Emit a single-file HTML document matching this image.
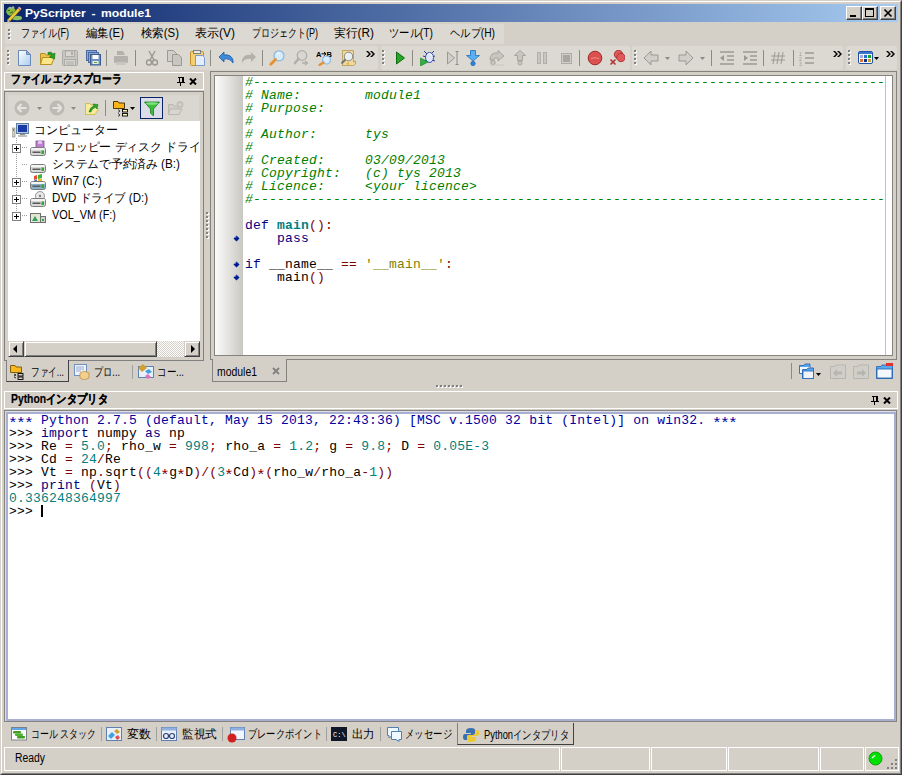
<!DOCTYPE html><html><head><meta charset="utf-8"><style>*{margin:0;padding:0;box-sizing:border-box}
html,body{width:902px;height:775px;overflow:hidden;background:#D4D0C8;font-family:"Liberation Sans",sans-serif;font-size:12px;color:#000;position:relative}
.a{position:absolute}
.t{position:absolute;white-space:pre;line-height:14px;transform-origin:0 0}
.m{position:absolute;font-family:"Liberation Mono",monospace;font-size:13px;line-height:13px;white-space:pre;letter-spacing:0.2px}
.k{color:#000080}.o{color:#800000}.n{color:#008080}.c{color:#008000;font-style:italic}.s{color:#808000}.b{color:#000}
</style></head><body><div class="a" style="left:0px;top:0px;width:902px;height:775px;border-top:1px solid #D4D0C8;border-left:1px solid #D4D0C8;border-right:1px solid #404040;border-bottom:1px solid #404040"></div>
<div class="a" style="left:1px;top:1px;width:900px;height:773px;border-top:1px solid #FFF;border-left:1px solid #FFF;border-right:1px solid #808080;border-bottom:1px solid #808080"></div>
<div class="a" style="left:4px;top:4px;width:894px;height:18px;background:linear-gradient(90deg,#0A246A,#A6CAF0)"></div>
<svg class="a" style="left:4px;top:3px;" width="20" height="19" viewBox="0 0 20 19"><ellipse cx="13" cy="15" rx="5" ry="2.2" fill="#8CC060"/><ellipse cx="7" cy="8.5" rx="4.8" ry="4.2" fill="#86BC3C"/><ellipse cx="6" cy="5" rx="1.6" ry="1.3" fill="#A0B0A0"/><ellipse cx="9" cy="4.5" rx="1.3" ry="1.2" fill="#A0B0A0"/><path d="M3.5 7.5 H6 M6 10 L9 9" stroke="#2A6A10" stroke-width="1"/><path d="M3.5 16.5 L14 5 L16.5 7 L6 18.5 Z" fill="#E8C838" stroke="#5A4A10" stroke-width="0.6"/><path d="M14 5 L15 3.5 L17.5 5.5 L16.5 7 Z" fill="#F0A0B0"/><path d="M3.5 16.5 L6 18.5 L3.5 19 Z" fill="#F4D0C0"/></svg>
<div class="t" id="t0" style="left:25px;top:5px;color:#FFF;font-weight:bold;font-size:11px;line-height:16px;word-spacing:2px;transform:scaleX(1.1048);">PyScripter - module1</div>
<div class="a" style="left:846px;top:6px;width:16px;height:14px;background:#D4D0C8;border-top:1px solid #FFF;border-left:1px solid #FFF;border-right:1px solid #404040;border-bottom:1px solid #404040;box-shadow:inset -1px -1px #808080"></div>
<svg class="a" style="left:846px;top:6px;" width="16" height="14" viewBox="0 0 16 14"><rect x="4" y="9" width="6" height="2" fill="#000"/></svg>
<div class="a" style="left:862px;top:6px;width:16px;height:14px;background:#D4D0C8;border-top:1px solid #FFF;border-left:1px solid #FFF;border-right:1px solid #404040;border-bottom:1px solid #404040;box-shadow:inset -1px -1px #808080"></div>
<svg class="a" style="left:862px;top:6px;" width="16" height="14" viewBox="0 0 16 14"><rect x="3.5" y="2.5" width="8" height="8" fill="none" stroke="#000"/><rect x="3" y="2" width="9" height="2" fill="#000"/></svg>
<div class="a" style="left:880px;top:6px;width:16px;height:14px;background:#D4D0C8;border-top:1px solid #FFF;border-left:1px solid #FFF;border-right:1px solid #404040;border-bottom:1px solid #404040;box-shadow:inset -1px -1px #808080"></div>
<svg class="a" style="left:880px;top:6px;" width="16" height="14" viewBox="0 0 16 14"><path d="M4.5 3.5 L11.5 10.5 M11.5 3.5 L4.5 10.5" stroke="#000" stroke-width="1.7"/></svg>
<div class="a" style="left:5px;top:24px;width:499px;height:20px;background:#DCD9D2;border-radius:2px"></div>
<div class="a" style="left:8px;top:29px;width:2px;height:2px;background:#808080;box-shadow:1px 1px #FFF"></div>
<div class="a" style="left:8px;top:33px;width:2px;height:2px;background:#808080;box-shadow:1px 1px #FFF"></div>
<div class="a" style="left:8px;top:37px;width:2px;height:2px;background:#808080;box-shadow:1px 1px #FFF"></div>
<div class="t" id="t1" style="left:21px;top:26px;font-size:12px;line-height:14px;transform:scaleX(0.7580);">ファイル(F)</div>
<div class="t" id="t2" style="left:86px;top:26px;font-size:12px;line-height:14px;transform:scaleX(0.9500);">編集(E)</div>
<div class="t" id="t3" style="left:141px;top:26px;font-size:12px;line-height:14px;transform:scaleX(0.9500);">検索(S)</div>
<div class="t" id="t4" style="left:195px;top:26px;font-size:12px;line-height:14px;transform:scaleX(1.0000);">表示(V)</div>
<div class="t" id="t5" style="left:252px;top:26px;font-size:12px;line-height:14px;transform:scaleX(0.7500);">プロジェクト(P)</div>
<div class="t" id="t6" style="left:334px;top:26px;font-size:12px;line-height:14px;transform:scaleX(0.9835);">実行(R)</div>
<div class="t" id="t7" style="left:389px;top:26px;font-size:12px;line-height:14px;transform:scaleX(0.8572);">ツール(T)</div>
<div class="t" id="t8" style="left:450px;top:26px;font-size:12px;line-height:14px;transform:scaleX(0.8543);">ヘルプ(H)</div>
<div class="a" style="left:5px;top:46px;width:373px;height:24px;background:#DCD9D2;border-radius:2px"></div>
<div class="a" style="left:381px;top:46px;width:249px;height:24px;background:#DCD9D2;border-radius:2px"></div>
<div class="a" style="left:632px;top:46px;width:211px;height:24px;background:#DCD9D2;border-radius:2px"></div>
<div class="a" style="left:846px;top:46px;width:51px;height:24px;background:#DCD9D2;border-radius:2px"></div>
<div class="a" style="left:7px;top:50px;width:2px;height:2px;background:#808080;box-shadow:1px 1px #FFF"></div>
<div class="a" style="left:7px;top:54px;width:2px;height:2px;background:#808080;box-shadow:1px 1px #FFF"></div>
<div class="a" style="left:7px;top:58px;width:2px;height:2px;background:#808080;box-shadow:1px 1px #FFF"></div>
<div class="a" style="left:7px;top:62px;width:2px;height:2px;background:#808080;box-shadow:1px 1px #FFF"></div>
<svg class="a" style="left:17px;top:50px;" width="16" height="16" viewBox="0 0 16 16"><defs><linearGradient id="gd" x1="0" y1="0" x2="1" y2="1"><stop offset="0" stop-color="#FFFFFF"/><stop offset="1" stop-color="#A8CCF0"/></linearGradient></defs><path d="M1.5 0.5 H9.5 L13.5 4.5 V15.5 H1.5 Z" fill="url(#gd)" stroke="#6A88B8"/><path d="M9.5 0.5 V4.5 H13.5 Z" fill="#7AA8E0" stroke="#6A88B8"/></svg>
<svg class="a" style="left:40px;top:50px;" width="16" height="16" viewBox="0 0 16 16"><path d="M0.5 3.5 H5 L6 5 H11.5 V14.5 H0.5 Z" fill="#E8C448" stroke="#B89020"/><path d="M2.5 7.5 H14.5 L11.5 14.5 H0.5 Z" fill="#FCE68A" stroke="#B89020"/><path d="M8 2.5 Q11 1 13 4 L15 3 L14.5 9 L9.5 7 L11.5 6 Q10.5 4 8 4.5 Z" fill="#28A028" stroke="#107010" stroke-width="0.6"/></svg>
<svg class="a" style="left:62px;top:50px;" width="16" height="16" viewBox="0 0 16 16"><rect x="0.5" y="0.5" width="15" height="15" rx="1" fill="#C8C6C0" stroke="#ADABA5"/><rect x="3.5" y="1" width="9" height="5.5" fill="#D8D6D0" stroke="#ADABA5"/><rect x="9" y="2" width="2" height="3" fill="#ADABA5"/><rect x="2.5" y="9.5" width="11" height="6" fill="#D8D6D0" stroke="#ADABA5"/><path d="M4 12 H12 M4 14 H12" stroke="#ADABA5"/></svg>
<svg class="a" style="left:86px;top:50px;" width="16" height="16" viewBox="0 0 16 16"><rect x="0.5" y="0.5" width="10" height="10" fill="#88A8D8" stroke="#4A6AA0"/><rect x="2.5" y="2.5" width="10" height="10" fill="#88A8D8" stroke="#4A6AA0"/><rect x="4.5" y="4.5" width="10" height="10.5" fill="#6E90C8" stroke="#3A5A90"/><rect x="6.5" y="5" width="6" height="4" fill="#FFF"/><rect x="6.5" y="11" width="6" height="3" fill="#E8F0D8"/><rect x="8" y="12" width="3" height="1" fill="#60A040"/></svg>
<div class="a" style="left:106px;top:50px;width:1px;height:16px;background:#8C8A84"></div>
<svg class="a" style="left:113px;top:50px;" width="16" height="16" viewBox="0 0 16 16"><path d="M4 1 H10 L12 5 H4 Z" fill="#B4B1AA"/><rect x="1" y="6" width="14" height="7" rx="1" fill="#B4B1AA"/><rect x="3" y="12" width="10" height="3" fill="#C8C6C0"/></svg>
<div class="a" style="left:135px;top:50px;width:1px;height:16px;background:#8C8A84"></div>
<svg class="a" style="left:144px;top:50px;" width="16" height="16" viewBox="0 0 16 16"><path d="M5 1 L10 10 M11 1 L6 10" stroke="#9C9990" stroke-width="1.5"/><circle cx="5" cy="12.5" r="2.5" fill="none" stroke="#9C9990" stroke-width="1.4"/><circle cx="11" cy="12.5" r="2.5" fill="none" stroke="#9C9990" stroke-width="1.4"/></svg>
<svg class="a" style="left:167px;top:50px;" width="16" height="16" viewBox="0 0 16 16"><path d="M0.5 0.5 H6.5 L9.5 3.5 V11.5 H0.5 Z" fill="#D0CEC8" stroke="#9C9990"/><path d="M5.5 4.5 H11.5 L14.5 7.5 V15.5 H5.5 Z" fill="#C8C6C0" stroke="#9C9990"/></svg>
<svg class="a" style="left:190px;top:50px;" width="16" height="16" viewBox="0 0 16 16"><rect x="0.5" y="1.5" width="13" height="14" rx="1" fill="#F2D070" stroke="#C09030"/><rect x="3.5" y="0.5" width="7" height="3" fill="#E8E8E8" stroke="#808080"/><path d="M5.5 5.5 H12.5 L14.5 7.5 V15.5 H5.5 Z" fill="#E4EEFA" stroke="#7A9CCF"/></svg>
<div class="a" style="left:210px;top:50px;width:1px;height:16px;background:#8C8A84"></div>
<svg class="a" style="left:218px;top:50px;" width="16" height="16" viewBox="0 0 16 16"><path d="M1 7 L6 2 V5 Q13 4 15 10 L15 13 Q12 8 6 9 V12 Z" fill="#3C8AD8" stroke="#1C5CA8" stroke-width="0.8"/></svg>
<svg class="a" style="left:241px;top:50px;" width="16" height="16" viewBox="0 0 16 16"><path d="M15 7 L10 2 V5 Q3 4 1 10 L1 13 Q4 8 10 9 V12 Z" fill="#B4B1AA"/></svg>
<div class="a" style="left:262px;top:50px;width:1px;height:16px;background:#8C8A84"></div>
<svg class="a" style="left:269px;top:50px;" width="16" height="16" viewBox="0 0 16 16"><circle cx="10" cy="5.8" r="5" fill="#D4ECFC" stroke="#8CB8E0" stroke-width="1.3"/><path d="M7.5 4 Q9 2.5 11 3" stroke="#FFF" fill="none"/><path d="M6.5 9.5 L1.8 14.2" stroke="#E89030" stroke-width="2.8" stroke-linecap="round"/></svg>
<svg class="a" style="left:293px;top:50px;" width="16" height="16" viewBox="0 0 16 16"><circle cx="9" cy="5.5" r="4.8" fill="#D8D6D0" stroke="#B0AEA8" stroke-width="1.3"/><path d="M5.5 9 L2 13" stroke="#B0AEA8" stroke-width="2.6" stroke-linecap="round"/><path d="M9 13 H14 M12 11 L14.5 13 L12 15" stroke="#B0AEA8" stroke-width="1.3" fill="none"/></svg>
<svg class="a" style="left:316px;top:50px;" width="16" height="16" viewBox="0 0 16 16"><text x="0" y="6.5" font-size="7.5" font-weight="bold" font-family="Liberation Sans" letter-spacing="-0.3">A</text><text x="10.5" y="6.5" font-size="7.5" font-weight="bold" font-family="Liberation Sans">B</text><path d="M5.5 3.8 H9.5 M8 2 L10 3.8 L8 5.6" stroke="#000" stroke-width="1" fill="none"/><circle cx="10.5" cy="10" r="4" fill="#D4ECFC" stroke="#8CB8E0" stroke-width="1.2"/><path d="M7.5 12.5 L3.5 15" stroke="#E89030" stroke-width="2.2" stroke-linecap="round"/></svg>
<svg class="a" style="left:340px;top:50px;" width="16" height="16" viewBox="0 0 16 16"><path d="M2.5 0.5 H13.5 V12 L15.5 11 V14 L13.5 15.5 H2.5 Z" fill="#F0D898" stroke="#B89850" stroke-width="0.8"/><circle cx="8.5" cy="6.5" r="4.2" fill="#E8F0F4" stroke="#909088" stroke-width="1.1"/><path d="M5.5 9.5 L1.5 13.5" stroke="#707070" stroke-width="1.8"/><path d="M6 14 L9 11 L9 15.5 Z" fill="#D8B868"/></svg>
<svg class="a" style="left:366px;top:51px;" width="9" height="6" viewBox="0 0 9 6"><path d="M0 0 H2 L5 3 L2 6 H0 L3 3 Z M4 0 H6 L9 3 L6 6 H4 L7 3 Z" fill="#000"/></svg>
<div class="a" style="left:382px;top:50px;width:2px;height:2px;background:#808080;box-shadow:1px 1px #FFF"></div>
<div class="a" style="left:382px;top:54px;width:2px;height:2px;background:#808080;box-shadow:1px 1px #FFF"></div>
<div class="a" style="left:382px;top:58px;width:2px;height:2px;background:#808080;box-shadow:1px 1px #FFF"></div>
<div class="a" style="left:382px;top:62px;width:2px;height:2px;background:#808080;box-shadow:1px 1px #FFF"></div>
<svg class="a" style="left:394px;top:50px;" width="16" height="16" viewBox="0 0 16 16"><path d="M2.5 2 L10.5 8 L2.5 14 Z" fill="#28A428" stroke="#0E6E0E"/></svg>
<div class="a" style="left:412px;top:50px;width:1px;height:16px;background:#8C8A84"></div>
<svg class="a" style="left:420px;top:50px;" width="16" height="16" viewBox="0 0 16 16"><path d="M4 1 L7 4 M14 1 L11 4 M3 6 L6 7 M15 6 L12 7 M4 11 L7 10 M15 11 L12 10" stroke="#2A3A90" stroke-width="1"/><ellipse cx="9.5" cy="7.5" rx="4" ry="5" fill="#DDE6F8" stroke="#3050A8"/><path d="M8 4 Q11 3 12 6" stroke="#FFF" fill="none"/><path d="M0.5 8 L8 12 L0.5 16 Z" fill="#30B040" stroke="#108020" stroke-width="0.6"/></svg>
<svg class="a" style="left:446px;top:50px;" width="16" height="16" viewBox="0 0 16 16"><path d="M1.5 2 L8.5 8 L1.5 14 Z" fill="#D0CEC8" stroke="#9C9990"/><path d="M11 1.5 V14.5 M9.5 1.5 H12.5 M9.5 14.5 H12.5" stroke="#8C8A84"/></svg>
<svg class="a" style="left:466px;top:50px;" width="16" height="16" viewBox="0 0 16 16"><path d="M4.5 0.5 H9.5 V5.5 H13.5 L7 11 L0.5 5.5 H4.5 Z" fill="#58B0F0" stroke="#2070C0" stroke-width="0.8"/><circle cx="7" cy="13.5" r="2.2" fill="#3080D0" stroke="#1860B0" stroke-width="0.6"/></svg>
<svg class="a" style="left:489px;top:50px;" width="16" height="16" viewBox="0 0 16 16"><path d="M1 10 Q1 2 9 3 L9 0.5 L15 6 L9 11 V8 Q5 7 4.5 10 Z" fill="#C8C6C0" stroke="#9C9990" stroke-width="0.8"/><circle cx="4" cy="12.5" r="2.2" fill="#C8C6C0" stroke="#9C9990" stroke-width="0.8"/><path d="M1 15 H15" stroke="#C8C6C0"/></svg>
<svg class="a" style="left:514px;top:50px;" width="16" height="16" viewBox="0 0 16 16"><path d="M3.5 10.5 H8.5 V5.5 H11.5 L6 0.5 L0.5 5.5 H3.5 Z" fill="#C8C6C0" stroke="#9C9990" stroke-width="0.8"/><circle cx="6" cy="13" r="2" fill="#C8C6C0" stroke="#9C9990" stroke-width="0.8"/></svg>
<svg class="a" style="left:537px;top:50px;" width="16" height="16" viewBox="0 0 16 16"><rect x="0.5" y="2.5" width="3" height="11" fill="#C8C6C0" stroke="#B0AEA8"/><rect x="6.5" y="2.5" width="3" height="11" fill="#C8C6C0" stroke="#B0AEA8"/></svg>
<svg class="a" style="left:561px;top:50px;" width="16" height="16" viewBox="0 0 16 16"><rect x="0.5" y="3.5" width="10" height="10" fill="#D0CEC8" stroke="#ADABA5"/><rect x="2" y="5" width="7" height="7" fill="#A8A6A0"/></svg>
<div class="a" style="left:579px;top:50px;width:1px;height:16px;background:#8C8A84"></div>
<svg class="a" style="left:587px;top:50px;" width="16" height="16" viewBox="0 0 16 16"><circle cx="8" cy="8" r="6.8" fill="#DC5050" stroke="#A02828"/><path d="M4 8.5 Q8 7 12 8.5" stroke="#F09090" fill="none"/></svg>
<svg class="a" style="left:609px;top:50px;" width="16" height="16" viewBox="0 0 16 16"><circle cx="9.5" cy="4.5" r="4.2" fill="#E05858" stroke="#A02828" stroke-width="0.8"/><circle cx="12" cy="7.5" r="4.2" fill="#E05858" stroke="#A02828" stroke-width="0.8"/><path d="M1.5 9.5 L6.5 14.5 M6.5 9.5 L1.5 14.5" stroke="#B03030" stroke-width="1.6"/></svg>
<div class="a" style="left:634px;top:50px;width:2px;height:2px;background:#808080;box-shadow:1px 1px #FFF"></div>
<div class="a" style="left:634px;top:54px;width:2px;height:2px;background:#808080;box-shadow:1px 1px #FFF"></div>
<div class="a" style="left:634px;top:58px;width:2px;height:2px;background:#808080;box-shadow:1px 1px #FFF"></div>
<div class="a" style="left:634px;top:62px;width:2px;height:2px;background:#808080;box-shadow:1px 1px #FFF"></div>
<svg class="a" style="left:643px;top:50px;" width="16" height="16" viewBox="0 0 16 16"><path d="M1 8 L8 1 V5 H15 V11 H8 V15 Z" fill="#D0CEC8" stroke="#9C9990"/></svg>
<svg class="a" style="left:665px;top:57px;" width="5" height="3" viewBox="0 0 5 3"><path d="M0 0 H5 L2.5 3 Z" fill="#8C8A84"/></svg>
<svg class="a" style="left:678px;top:50px;" width="16" height="16" viewBox="0 0 16 16"><path d="M15 8 L8 1 V5 H1 V11 H8 V15 Z" fill="#D0CEC8" stroke="#9C9990"/></svg>
<svg class="a" style="left:700px;top:57px;" width="5" height="3" viewBox="0 0 5 3"><path d="M0 0 H5 L2.5 3 Z" fill="#8C8A84"/></svg>
<div class="a" style="left:711px;top:50px;width:1px;height:16px;background:#8C8A84"></div>
<svg class="a" style="left:719px;top:50px;" width="16" height="16" viewBox="0 0 16 16"><path d="M1 2 H15 M8 6 H15 M8 10 H15 M1 14 H15" stroke="#9C9990" stroke-width="1.5"/><path d="M1 8 L5 5 V11 Z" fill="#9C9990"/></svg>
<svg class="a" style="left:742px;top:50px;" width="16" height="16" viewBox="0 0 16 16"><path d="M1 2 H15 M8 6 H15 M8 10 H15 M1 14 H15" stroke="#9C9990" stroke-width="1.5"/><path d="M6 8 L2 5 V11 Z" fill="#9C9990"/></svg>
<div class="a" style="left:763px;top:50px;width:1px;height:16px;background:#8C8A84"></div>
<svg class="a" style="left:770px;top:50px;" width="16" height="16" viewBox="0 0 16 16"><path d="M5 2 L3 14 M9 2 L7 14 M13 2 L11 14 M1 6 H15 M1 10 H15" stroke="#9C9990" stroke-width="1"/></svg>
<div class="a" style="left:793px;top:50px;width:1px;height:16px;background:#8C8A84"></div>
<svg class="a" style="left:799px;top:50px;" width="16" height="16" viewBox="0 0 16 16"><path d="M6 3 H15 M6 8 H15 M6 13 H15" stroke="#9C9990" stroke-width="1.5"/><text x="0" y="6" font-size="5" fill="#9C9990">1</text><text x="0" y="11" font-size="5" fill="#9C9990">2</text><text x="0" y="16" font-size="5" fill="#9C9990">3</text></svg>
<svg class="a" style="left:833px;top:51px;" width="9" height="6" viewBox="0 0 9 6"><path d="M0 0 H2 L5 3 L2 6 H0 L3 3 Z M4 0 H6 L9 3 L6 6 H4 L7 3 Z" fill="#000"/></svg>
<div class="a" style="left:848px;top:50px;width:2px;height:2px;background:#808080;box-shadow:1px 1px #FFF"></div>
<div class="a" style="left:848px;top:54px;width:2px;height:2px;background:#808080;box-shadow:1px 1px #FFF"></div>
<div class="a" style="left:848px;top:58px;width:2px;height:2px;background:#808080;box-shadow:1px 1px #FFF"></div>
<div class="a" style="left:848px;top:62px;width:2px;height:2px;background:#808080;box-shadow:1px 1px #FFF"></div>
<svg class="a" style="left:858px;top:51px;" width="15" height="13" viewBox="0 0 15 13"><rect x="0.5" y="0.5" width="14" height="12" rx="1.5" fill="#F4F8FF" stroke="#1E50A8"/><rect x="1" y="1" width="13" height="2" fill="#3A78D0"/><rect x="2" y="4" width="3" height="3" fill="#A8A8D8"/><rect x="6" y="4" width="3" height="3" fill="#2070D0"/><rect x="10" y="4" width="3" height="3" fill="#20A030"/><rect x="2" y="8" width="3" height="3" fill="#E07040"/><rect x="6" y="8" width="3" height="3" fill="#103080"/><rect x="10" y="8" width="3" height="3" fill="#C8A030"/></svg>
<svg class="a" style="left:874px;top:57px;" width="5" height="3" viewBox="0 0 5 3"><path d="M0 0 H5 L2.5 3 Z" fill="#000"/></svg>
<svg class="a" style="left:886px;top:51px;" width="9" height="6" viewBox="0 0 9 6"><path d="M0 0 H2 L5 3 L2 6 H0 L3 3 Z M4 0 H6 L9 3 L6 6 H4 L7 3 Z" fill="#000"/></svg>
<div class="a" style="left:4px;top:72px;width:200px;height:18px;border:1px solid #FFF"></div>
<div class="t" id="t9" style="left:11px;top:73px;font-weight:bold;font-size:12px;line-height:12px;-webkit-text-stroke:0.2px #000;transform:scaleX(0.8201);">ファイル エクスプローラ</div>
<svg class="a" style="left:177px;top:77px;" width="8" height="9" viewBox="0 0 8 9"><rect x="1" y="0" width="6" height="1" fill="#000"/><rect x="2" y="1" width="1" height="4" fill="#000"/><rect x="5" y="1" width="2" height="4" fill="#000"/><rect x="0" y="5" width="8" height="1" fill="#000"/><rect x="3" y="6" width="1" height="3" fill="#000"/></svg>
<svg class="a" style="left:189px;top:78px;" width="8" height="7" viewBox="0 0 8 7"><path d="M1 0.5 L7 6.5 M7 0.5 L1 6.5" stroke="#000" stroke-width="2"/></svg>
<div class="a" style="left:4px;top:91px;width:200px;height:270px;border-top:1px solid #808080;border-left:1px solid #808080;border-right:1px solid #808080"></div>
<div class="a" style="left:8px;top:95px;width:191px;height:26px;background:#DAD7D0"></div>
<svg class="a" style="left:14px;top:100px;" width="16" height="16" viewBox="0 0 16 16"><circle cx="8" cy="8" r="7.5" fill="#BDBAB3"/><path d="M3.5 8 L7.5 4 M3.5 8 L7.5 12 M3.5 8 H12.5" stroke="#E6E4DE" stroke-width="2" fill="none"/></svg>
<svg class="a" style="left:37px;top:107px;" width="5" height="3" viewBox="0 0 5 3"><path d="M0 0 H5 L2.5 3 Z" fill="#8C8A84"/></svg>
<svg class="a" style="left:49px;top:100px;" width="16" height="16" viewBox="0 0 16 16"><circle cx="8" cy="8" r="7.5" fill="#BDBAB3"/><path d="M12.5 8 L8.5 4 M12.5 8 L8.5 12 M12.5 8 H3.5" stroke="#E6E4DE" stroke-width="2" fill="none"/></svg>
<svg class="a" style="left:71px;top:107px;" width="5" height="3" viewBox="0 0 5 3"><path d="M0 0 H5 L2.5 3 Z" fill="#8C8A84"/></svg>
<svg class="a" style="left:84px;top:100px;" width="16" height="16" viewBox="0 0 16 16"><path d="M1.5 3.5 H6 L7 5 H12.5 V8 L14.5 9 L11 14.5 H1.5 Z" fill="#F6EC9A" stroke="#C8B440" stroke-width="0.8"/><path d="M5 12 Q6 7 10 6 L9 4 L14 4.5 L13 9 L11.5 7.5 Q8 8 7 12 Z" fill="#30A030" stroke="#107010" stroke-width="0.5"/></svg>
<div class="a" style="left:105px;top:100px;width:1px;height:16px;background:#8C8A84"></div>
<svg class="a" style="left:113px;top:100px;" width="16" height="17" viewBox="0 0 16 17"><path d="M0.5 1.5 H5 L6 3 H11.5 V8.5 H0.5 Z" fill="#FAB318" stroke="#3A2A00" stroke-width="0.9"/><path d="M5 9.5 L7 11 L5 12.5 M5 13.5 L7 15 L5 16.5" stroke="#000" stroke-width="0.7" fill="none"/><rect x="9.5" y="9.5" width="5" height="2.5" fill="#FFF6C0" stroke="#000" stroke-width="0.9"/><rect x="9.5" y="13.5" width="5" height="2.5" fill="#FFF6C0" stroke="#000" stroke-width="0.9"/></svg>
<svg class="a" style="left:130px;top:107px;" width="5" height="3" viewBox="0 0 5 3"><path d="M0 0 H5 L2.5 3 Z" fill="#000"/></svg>
<div class="a" style="left:140px;top:97px;width:23px;height:22px;border:1px solid #0A246A;background:#DCDDE6"></div>
<svg class="a" style="left:144px;top:101px;" width="16" height="16" viewBox="0 0 16 16"><path d="M0.5 1 H15.5 L9.5 8 V15 L6.5 12 V8 Z" fill="#3CC03C" stroke="#1C7A1C" stroke-width="0.8"/><ellipse cx="8" cy="2.5" rx="6" ry="1.3" fill="#80E080"/></svg>
<svg class="a" style="left:168px;top:100px;" width="16" height="16" viewBox="0 0 16 16"><path d="M0.5 4.5 H5 L6 6 H11 V14.5 H0.5 Z" fill="#D0CEC8" stroke="#BAB7B0"/><path d="M2 9 H14 L11 14.5 H0.5 Z" fill="#D8D6D0" stroke="#BAB7B0"/><circle cx="12" cy="4.5" r="3.5" fill="#C4C1BA"/><circle cx="12" cy="4.5" r="1.3" fill="#DAD7D0"/></svg>
<div class="a" style="left:8px;top:121px;width:192px;height:220px;background:#FFF"></div>
<svg class="a" style="left:12px;top:123px;" width="17" height="15" viewBox="0 0 17 15"><rect x="4.5" y="0.5" width="12" height="10" fill="#B8C8E0" stroke="#6080A0"/><rect x="6" y="2" width="9" height="7" fill="#1A3AA8"/><rect x="8" y="11" width="5" height="1" fill="#909090"/><rect x="6" y="12" width="9" height="2" fill="#C0C0C0"/><rect x="0" y="5" width="3" height="9" fill="#D0D0C0" stroke="#808080" stroke-width="0.6"/><rect x="1" y="6" width="1" height="2" fill="#40A040"/></svg>
<div class="t" id="t10" style="left:34px;top:123px;font-size:12px;line-height:14px;transform:scaleX(1.0000);">コンピューター</div>
<div class="a" style="left:16px;top:138px;width:1px;height:79px;background:repeating-linear-gradient(#A0A0A0 0 1px,transparent 1px 2px)"></div>
<div class="a" style="left:22px;top:147px;width:6px;height:1px;background:repeating-linear-gradient(90deg,#A0A0A0 0 1px,transparent 1px 2px)"></div>
<div class="a" style="left:22px;top:164px;width:6px;height:1px;background:repeating-linear-gradient(90deg,#A0A0A0 0 1px,transparent 1px 2px)"></div>
<div class="a" style="left:22px;top:181px;width:6px;height:1px;background:repeating-linear-gradient(90deg,#A0A0A0 0 1px,transparent 1px 2px)"></div>
<div class="a" style="left:22px;top:198px;width:6px;height:1px;background:repeating-linear-gradient(90deg,#A0A0A0 0 1px,transparent 1px 2px)"></div>
<div class="a" style="left:22px;top:215px;width:6px;height:1px;background:repeating-linear-gradient(90deg,#A0A0A0 0 1px,transparent 1px 2px)"></div>
<div class="a" style="left:12px;top:144px;width:9px;height:9px;border:1px solid #808080;background:#FFF"></div>
<div class="a" style="left:14px;top:148px;width:5px;height:1px;background:#000"></div>
<div class="a" style="left:16px;top:146px;width:1px;height:5px;background:#000"></div>
<div class="a" style="left:12px;top:178px;width:9px;height:9px;border:1px solid #808080;background:#FFF"></div>
<div class="a" style="left:14px;top:182px;width:5px;height:1px;background:#000"></div>
<div class="a" style="left:16px;top:180px;width:1px;height:5px;background:#000"></div>
<div class="a" style="left:12px;top:195px;width:9px;height:9px;border:1px solid #808080;background:#FFF"></div>
<div class="a" style="left:14px;top:199px;width:5px;height:1px;background:#000"></div>
<div class="a" style="left:16px;top:197px;width:1px;height:5px;background:#000"></div>
<div class="a" style="left:12px;top:212px;width:9px;height:9px;border:1px solid #808080;background:#FFF"></div>
<div class="a" style="left:14px;top:216px;width:5px;height:1px;background:#000"></div>
<div class="a" style="left:16px;top:214px;width:1px;height:5px;background:#000"></div>
<svg class="a" style="left:30px;top:140px;" width="16" height="16" viewBox="0 0 16 16"><rect x="6" y="1" width="8" height="8" fill="#C080D0" stroke="#805090" stroke-width="0.8"/><rect x="8" y="1" width="4" height="3" fill="#E0C0F0"/><rect x="0.5" y="7.5" width="15" height="8" rx="2" fill="#D8D8D8" stroke="#7A7A7A"/><rect x="1" y="8" width="14" height="2" rx="1" fill="#F4F4F4"/><rect x="2.5" y="11.5" width="8" height="1.5" fill="#5A5A5A"/><rect x="11.5" y="10.5" width="2.5" height="3.5" fill="#30A830"/></svg>
<div class="t" id="t11" style="left:52px;top:140px;font-size:12px;line-height:14px;transform:scaleX(0.9889);">フロッピー ディスク ドライ</div>
<svg class="a" style="left:30px;top:157px;" width="16" height="16" viewBox="0 0 16 16"><rect x="0.5" y="7.5" width="15" height="8" rx="2" fill="#D8D8D8" stroke="#7A7A7A"/><rect x="1" y="8" width="14" height="2" rx="1" fill="#F4F4F4"/><rect x="2.5" y="11.5" width="8" height="1.5" fill="#5A5A5A"/><rect x="11.5" y="10.5" width="2.5" height="3.5" fill="#30A830"/></svg>
<div class="t" id="t12" style="left:52px;top:157px;font-size:12px;line-height:14px;transform:scaleX(0.9796);">システムで予約済み (B:)</div>
<svg class="a" style="left:30px;top:174px;" width="16" height="16" viewBox="0 0 16 16"><path d="M4 2 L7 1 V5 L4 6 Z" fill="#E05030"/><path d="M8 1 L12 0 V4 L8 5 Z" fill="#40B040"/><path d="M4 6.5 L7 5.5 V9 L4 10 Z" fill="#3070E0"/><path d="M8 5 L12 4.5 V8 L8 9 Z" fill="#F0C020"/><rect x="0.5" y="7.5" width="15" height="8" rx="2" fill="#8AB0C8" stroke="#7A7A7A"/><rect x="1" y="8" width="14" height="2" rx="1" fill="#F4F4F4"/><rect x="2.5" y="11.5" width="8" height="1.5" fill="#5A5A5A"/><rect x="11.5" y="10.5" width="2.5" height="3.5" fill="#30A830"/></svg>
<div class="t" id="t13" style="left:52px;top:174px;font-size:12px;line-height:14px;transform:scaleX(0.9867);">Win7 (C:)</div>
<svg class="a" style="left:30px;top:191px;" width="16" height="16" viewBox="0 0 16 16"><circle cx="10" cy="5" r="4.5" fill="#E8E8E8" stroke="#808080" stroke-width="0.8"/><circle cx="10" cy="5" r="1.2" fill="#808080"/><rect x="0.5" y="7.5" width="15" height="8" rx="2" fill="#D8D8D8" stroke="#7A7A7A"/><rect x="1" y="8" width="14" height="2" rx="1" fill="#F4F4F4"/><rect x="2.5" y="11.5" width="8" height="1.5" fill="#5A5A5A"/><rect x="11.5" y="10.5" width="2.5" height="3.5" fill="#30A830"/></svg>
<div class="t" id="t14" style="left:52px;top:191px;font-size:12px;line-height:14px;transform:scaleX(0.9600);">DVD ドライブ (D:)</div>
<svg class="a" style="left:30px;top:208px;" width="16" height="16" viewBox="0 0 16 16"><rect x="0.5" y="5.5" width="10" height="9" fill="#E0E8D0" stroke="#707070"/><path d="M2 13 L5 8 L8 13 Z" fill="#30A060"/><rect x="10.5" y="8.5" width="5" height="6" fill="#D0D0D0" stroke="#707070"/><rect x="12" y="11" width="2" height="2" fill="#30B030"/></svg>
<div class="t" id="t15" style="left:52px;top:208px;font-size:12px;line-height:14px;transform:scaleX(0.9054);">VOL_VM (F:)</div>
<div class="a" style="left:8px;top:341px;width:192px;height:16px;background:repeating-conic-gradient(#D4D0C8 0 25%,#FFF 0 50%) 0 0/2px 2px"></div>
<div class="a" style="left:8px;top:341px;width:16px;height:16px;background:#D4D0C8;border-top:1px solid #D4D0C8;border-left:1px solid #D4D0C8;border-right:1px solid #404040;border-bottom:1px solid #404040;box-shadow:inset 1px 1px #FFF,inset -1px -1px #808080"></div>
<svg class="a" style="left:8px;top:341px;" width="16" height="16" viewBox="0 0 16 16"><path d="M5 8 L9 4 V12 Z" fill="#000"/></svg>
<div class="a" style="left:24px;top:341px;width:133px;height:16px;background:#D4D0C8;border-top:1px solid #D4D0C8;border-left:1px solid #D4D0C8;border-right:1px solid #404040;border-bottom:1px solid #404040;box-shadow:inset 1px 1px #FFF,inset -1px -1px #808080"></div>
<div class="a" style="left:184px;top:341px;width:16px;height:16px;background:#D4D0C8;border-top:1px solid #D4D0C8;border-left:1px solid #D4D0C8;border-right:1px solid #404040;border-bottom:1px solid #404040;box-shadow:inset 1px 1px #FFF,inset -1px -1px #808080"></div>
<svg class="a" style="left:184px;top:341px;" width="16" height="16" viewBox="0 0 16 16"><path d="M11 8 L7 4 V12 Z" fill="#000"/></svg>
<div class="a" style="left:4px;top:360px;width:200px;height:1px;background:#808080"></div>
<div class="a" style="left:6px;top:360px;width:63px;height:22px;background:#D4D0C8;border-left:1px solid #808080;border-right:1px solid #404040;border-bottom:1px solid #404040"></div>
<svg class="a" style="left:10px;top:364px;" width="18" height="16" viewBox="0 0 18 16"><path d="M0.5 1.5 H5 L6 3 H11.5 V8.5 H0.5 Z" fill="#F8B820" stroke="#806010"/><path d="M4 10 L6 11 L4 12 M4 13 L6 14" stroke="#000" stroke-width="0.8" fill="none"/><rect x="8" y="9.5" width="5" height="2.5" fill="none" stroke="#000" stroke-width="0.9"/><rect x="8" y="13" width="5" height="2.5" fill="none" stroke="#000" stroke-width="0.9"/></svg>
<div class="t" id="t16" style="left:31px;top:365px;font-size:12px;line-height:14px;transform:scaleX(0.7171);">ファイ...</div>
<svg class="a" style="left:74px;top:364px;" width="16" height="16" viewBox="0 0 16 16"><rect x="0.5" y="0.5" width="12" height="11" fill="#F0F4FC" stroke="#7090C0"/><path d="M2 3 H10 M2 5 H10 M2 7 H7" stroke="#90A8D0"/><path d="M6 9 L10 7 L15 9 V14 L10 16 L6 14 Z" fill="#F0D090" stroke="#C09040" stroke-width="0.8"/></svg>
<div class="t" id="t17" style="left:94px;top:365px;font-size:12px;line-height:14px;transform:scaleX(0.7644);">プロ...</div>
<div class="a" style="left:132px;top:365px;width:1px;height:14px;background:#A0A0A0"></div>
<svg class="a" style="left:137px;top:363px;" width="18" height="17" viewBox="0 0 18 17"><rect x="1.5" y="3.5" width="15" height="11" fill="#E8F0FC" stroke="#6080B0"/><path d="M1 5 L6 1 L10 5 L5 9 Z" fill="#D0A030"/><path d="M8 8 L12 6 L15 9 L11 11 Z" fill="#40A0E0"/><path d="M8 13 L11 11 L14 14 L11 16 Z" fill="#E070C0"/></svg>
<div class="t" id="t18" style="left:157px;top:365px;font-size:12px;line-height:14px;transform:scaleX(0.7938);">コー...</div>
<div class="a" style="left:206px;top:212px;width:2px;height:2px;background:#808080;box-shadow:1px 1px #FFF"></div>
<div class="a" style="left:206px;top:216px;width:2px;height:2px;background:#808080;box-shadow:1px 1px #FFF"></div>
<div class="a" style="left:206px;top:220px;width:2px;height:2px;background:#808080;box-shadow:1px 1px #FFF"></div>
<div class="a" style="left:206px;top:224px;width:2px;height:2px;background:#808080;box-shadow:1px 1px #FFF"></div>
<div class="a" style="left:206px;top:228px;width:2px;height:2px;background:#808080;box-shadow:1px 1px #FFF"></div>
<div class="a" style="left:206px;top:232px;width:2px;height:2px;background:#808080;box-shadow:1px 1px #FFF"></div>
<div class="a" style="left:206px;top:236px;width:2px;height:2px;background:#808080;box-shadow:1px 1px #FFF"></div>
<div class="a" style="left:210px;top:71px;width:687px;height:289px;border:1px solid #85837D"></div>
<div class="a" style="left:214px;top:75px;width:679px;height:281px;background:#FFF;border:1px solid #85837D"></div>
<div class="a" style="left:215px;top:76px;width:28px;height:279px;background:linear-gradient(90deg,#FAFAFA,#E6E5E2 45%,#C9C7C1)"></div>
<div class="a" style="left:885px;top:76px;width:1px;height:279px;background:#C0C0C0"></div>
<div class="m" style="left:245px;top:76px;width:640px;overflow:hidden;font-size:13px;line-height:13px;letter-spacing:0.2px"><span class="c">#-------------------------------------------------------------------------------</span>
<span class="c"># Name:        module1</span>
<span class="c"># Purpose:</span>
<span class="c">#</span>
<span class="c"># Author:      tys</span>
<span class="c">#</span>
<span class="c"># Created:     03/09/2013</span>
<span class="c"># Copyright:   (c) tys 2013</span>
<span class="c"># Licence:     &lt;your licence&gt;</span>
<span class="c">#-------------------------------------------------------------------------------</span>

<span class="k">def </span><span style="color:#008080;font-weight:bold">main</span><span class="o">():</span>
<span class="k">    pass</span>

<span class="k">if </span><span class="b">__name__ </span><span class="o">== </span><span class="s">&#x27;__main__&#x27;</span><span class="o">:</span>
<span class="b">    main</span><span class="o">()</span></div>
<svg class="a" style="left:233px;top:235px;" width="7" height="7" viewBox="0 0 7 7"><path d="M3.5 0.5 L6.5 3.5 L3.5 6.5 L0.5 3.5 Z" fill="#001C90"/><path d="M1.5 2.5 L3 1 L3.5 1.5 L2 3 Z" fill="#80D0FF"/></svg>
<svg class="a" style="left:233px;top:261px;" width="7" height="7" viewBox="0 0 7 7"><path d="M3.5 0.5 L6.5 3.5 L3.5 6.5 L0.5 3.5 Z" fill="#001C90"/><path d="M1.5 2.5 L3 1 L3.5 1.5 L2 3 Z" fill="#80D0FF"/></svg>
<svg class="a" style="left:233px;top:274px;" width="7" height="7" viewBox="0 0 7 7"><path d="M3.5 0.5 L6.5 3.5 L3.5 6.5 L0.5 3.5 Z" fill="#001C90"/><path d="M1.5 2.5 L3 1 L3.5 1.5 L2 3 Z" fill="#80D0FF"/></svg>
<div class="a" style="left:211px;top:360px;width:685px;height:22px;background:#D4D0C8"></div>
<div class="a" style="left:212px;top:359px;width:75px;height:23px;background:#D4D0C8;border-left:1px solid #85837D;border-right:1px solid #85837D;border-bottom:1px solid #85837D"></div>
<div class="t" id="t19" style="left:217px;top:365px;font-size:12px;line-height:14px;transform:scaleX(0.8690);">module1</div>
<svg class="a" style="left:272px;top:367px;" width="8" height="8" viewBox="0 0 8 8"><path d="M1 1 L7 7 M7 1 L1 7" stroke="#808080" stroke-width="1.8"/></svg>
<div class="a" style="left:791px;top:363px;width:1px;height:16px;background:#8C8A84"></div>
<svg class="a" style="left:799px;top:363px;" width="22" height="16" viewBox="0 0 22 16"><path d="M0.5 2.5 H5 L6 1 H11 V10.5 H0.5 Z" fill="#5AA8F0" stroke="#2060B0" stroke-width="0.8"/><rect x="1" y="4" width="10" height="6" fill="#F4F8FC"/><path d="M3.5 6.5 H8 L9 5 H14.5 V15.5 H3.5 Z" fill="#5AA8F0" stroke="#2060B0" stroke-width="0.8"/><rect x="4" y="8" width="10.5" height="7.5" fill="#F0F4FA" stroke="#2060B0" stroke-width="0.8"/><path d="M17 10 H22 L19.5 13 Z" fill="#000"/></svg>
<svg class="a" style="left:830px;top:363px;" width="16" height="16" viewBox="0 0 16 16"><path d="M0.5 3.5 H5 L6 2 H15.5 V15.5 H0.5 Z" fill="#D0CEC8" stroke="#B8B5AE"/><path d="M3 10 L7 6 V8.5 H12 V11.5 H7 V14 Z" fill="#B8B5AE"/></svg>
<svg class="a" style="left:853px;top:363px;" width="16" height="16" viewBox="0 0 16 16"><path d="M0.5 3.5 H5 L6 2 H15.5 V15.5 H0.5 Z" fill="#D0CEC8" stroke="#B8B5AE"/><path d="M13 10 L9 6 V8.5 H4 V11.5 H9 V14 Z" fill="#B8B5AE"/></svg>
<svg class="a" style="left:876px;top:363px;" width="17" height="16" viewBox="0 0 17 16"><path d="M0.5 3.5 H5 L6 2 H16.5 V15.5 H0.5 Z" fill="#5AA8F0" stroke="#2060B0" stroke-width="0.8"/><rect x="1" y="6" width="15" height="9" fill="#F4F8FC" stroke="#2060B0" stroke-width="0.8"/><rect x="10" y="0" width="7" height="3" fill="#E03030"/></svg>
<div class="a" style="left:436px;top:385px;width:2px;height:2px;background:#808080;box-shadow:1px 1px #FFF"></div>
<div class="a" style="left:440px;top:385px;width:2px;height:2px;background:#808080;box-shadow:1px 1px #FFF"></div>
<div class="a" style="left:444px;top:385px;width:2px;height:2px;background:#808080;box-shadow:1px 1px #FFF"></div>
<div class="a" style="left:448px;top:385px;width:2px;height:2px;background:#808080;box-shadow:1px 1px #FFF"></div>
<div class="a" style="left:452px;top:385px;width:2px;height:2px;background:#808080;box-shadow:1px 1px #FFF"></div>
<div class="a" style="left:456px;top:385px;width:2px;height:2px;background:#808080;box-shadow:1px 1px #FFF"></div>
<div class="a" style="left:460px;top:385px;width:2px;height:2px;background:#808080;box-shadow:1px 1px #FFF"></div>
<div class="a" style="left:4px;top:391px;width:894px;height:18px;border:1px solid #FFF"></div>
<div class="t" id="t20" style="left:11px;top:393px;font-weight:bold;font-size:12px;line-height:12px;-webkit-text-stroke:0.2px #000;transform:scaleX(0.8609);">Pythonインタプリタ</div>
<svg class="a" style="left:871px;top:396px;" width="8" height="9" viewBox="0 0 8 9"><rect x="1" y="0" width="6" height="1" fill="#000"/><rect x="2" y="1" width="1" height="4" fill="#000"/><rect x="5" y="1" width="2" height="4" fill="#000"/><rect x="0" y="5" width="8" height="1" fill="#000"/><rect x="3" y="6" width="1" height="3" fill="#000"/></svg>
<svg class="a" style="left:883px;top:397px;" width="8" height="7" viewBox="0 0 8 7"><path d="M1 0.5 L7 6.5 M7 0.5 L1 6.5" stroke="#000" stroke-width="2"/></svg>
<div class="a" style="left:4px;top:410px;width:893px;height:312px;border:1px solid #85837D"></div>
<div class="a" style="left:5px;top:411px;width:891px;height:310px;border-top:1px solid #DCDDEA;border-left:1px solid #DCDDEA"></div>
<div class="a" style="left:6px;top:412px;width:890px;height:309px;border:2px solid #A8AFD0;background:#FFF"></div>
<div class="m" style="left:9px;top:414px;font-size:13px;line-height:13px;letter-spacing:0.2px"><span style="color:#0000A0"><span style="display:inline-block;transform:translateY(3px) scale(1.25,1.15)">*</span><span style="display:inline-block;transform:translateY(3px) scale(1.25,1.15)">*</span><span style="display:inline-block;transform:translateY(3px) scale(1.25,1.15)">*</span> Python 2.7.5 (default, May 15 2013, 22:43:36) [MSC v.1500 32 bit (Intel)] on win32. <span style="display:inline-block;transform:translateY(3px) scale(1.25,1.15)">*</span><span style="display:inline-block;transform:translateY(3px) scale(1.25,1.15)">*</span><span style="display:inline-block;transform:translateY(3px) scale(1.25,1.15)">*</span></span>
<span class="b">&gt;&gt;&gt; </span><span class="k">import </span><span class="b">numpy </span><span class="k">as </span><span class="b">np</span>
<span class="b">&gt;&gt;&gt; Re </span><span class="o">= </span><span class="n">5.0</span><span class="o">; </span><span class="b">rho_w </span><span class="o">= </span><span class="n">998</span><span class="o">; </span><span class="b">rho_a </span><span class="o">= </span><span class="n">1.2</span><span class="o">; </span><span class="b">g </span><span class="o">= </span><span class="n">9.8</span><span class="o">; </span><span class="b">D </span><span class="o">= </span><span class="n">0.05E-3</span>
<span class="b">&gt;&gt;&gt; Cd </span><span class="o">= </span><span class="n">24</span><span class="o">/</span><span class="b">Re</span>
<span class="b">&gt;&gt;&gt; Vt </span><span class="o">= </span><span class="b">np</span><span class="o">.</span><span class="b">sqrt</span><span class="o">((</span><span class="n">4</span><span class="o"><span style="display:inline-block;transform:translateY(3px) scale(1.25,1.15)">*</span></span><span class="b">g</span><span class="o"><span style="display:inline-block;transform:translateY(3px) scale(1.25,1.15)">*</span></span><span class="b">D</span><span class="o">)/(</span><span class="n">3</span><span class="o"><span style="display:inline-block;transform:translateY(3px) scale(1.25,1.15)">*</span></span><span class="b">Cd</span><span class="o">)<span style="display:inline-block;transform:translateY(3px) scale(1.25,1.15)">*</span>(</span><span class="b">rho_w</span><span class="o">/</span><span class="b">rho_a</span><span class="o">-</span><span class="n">1</span><span class="o">))</span>
<span class="b">&gt;&gt;&gt; </span><span class="k">print </span><span class="o">(</span><span class="b">Vt</span><span class="o">)</span>
<span class="n">0.336248364997</span>
<span class="b">&gt;&gt;&gt; </span></div>
<div class="a" style="left:41px;top:505px;width:2px;height:12px;background:#000"></div>
<svg class="a" style="left:11px;top:727px;" width="16" height="14" viewBox="0 0 16 14"><rect x="0.5" y="0.5" width="15" height="12.5" fill="#FFF" stroke="#7A8088"/><rect x="1" y="1" width="14" height="2" fill="#60A8E8"/><rect x="2" y="4" width="8" height="2.5" rx="1" fill="#40A020"/><rect x="4" y="6.5" width="8" height="2.5" rx="1" fill="#50B030"/><rect x="6" y="9" width="8" height="2.5" rx="1" fill="#40A020"/></svg>
<div class="t" id="t21" style="left:31px;top:727px;font-size:12px;line-height:14px;transform:scaleX(0.7442);">コール スタック</div>
<div class="a" style="left:101px;top:727px;width:1px;height:14px;background:#A0A0A0"></div>
<svg class="a" style="left:106px;top:726px;" width="16" height="16" viewBox="0 0 16 16"><rect x="0.5" y="1.5" width="15" height="13" fill="#E8F0FC" stroke="#6080B0"/><path d="M2 10 L6 6 L9 9 L5 13 Z" fill="#40A0E0"/><path d="M8 5 L11 3 L14 6 L11 8 Z" fill="#D0A030"/><path d="M9 11 L12 9 L14 12 L11 14 Z" fill="#E05050"/></svg>
<div class="t" id="t22" style="left:127px;top:727px;font-size:12px;line-height:14px;transform:scaleX(1.0000);">変数</div>
<div class="a" style="left:156px;top:727px;width:1px;height:14px;background:#A0A0A0"></div>
<svg class="a" style="left:161px;top:726px;" width="16" height="16" viewBox="0 0 16 16"><rect x="0.5" y="1.5" width="15" height="13" fill="#E8F0FC" stroke="#6080B0"/><rect x="0.5" y="1.5" width="15" height="3" fill="#90B0E0"/><circle cx="5" cy="10" r="2.5" fill="none" stroke="#304070" stroke-width="1.2"/><circle cx="11" cy="10" r="2.5" fill="none" stroke="#304070" stroke-width="1.2"/></svg>
<div class="t" id="t23" style="left:182px;top:727px;font-size:12px;line-height:14px;transform:scaleX(0.9722);">監視式</div>
<div class="a" style="left:222px;top:727px;width:1px;height:14px;background:#A0A0A0"></div>
<svg class="a" style="left:227px;top:726px;" width="18" height="17" viewBox="0 0 18 17"><rect x="3.5" y="1.5" width="14" height="12" fill="#F0F4FC" stroke="#6080B0"/><rect x="3.5" y="1.5" width="14" height="3" fill="#90B0E0"/><circle cx="5" cy="12" r="4.5" fill="#D02020"/></svg>
<div class="t" id="t24" style="left:248px;top:727px;font-size:12px;line-height:14px;transform:scaleX(0.7708);">ブレークポイント</div>
<div class="a" style="left:326px;top:727px;width:1px;height:14px;background:#A0A0A0"></div>
<svg class="a" style="left:331px;top:727px;" width="16" height="14" viewBox="0 0 16 14"><rect x="0" y="0" width="16" height="14" fill="#101828"/><text x="2" y="10" font-size="7" fill="#FFF" font-family="Liberation Mono">C:\</text></svg>
<div class="t" id="t25" style="left:352px;top:727px;font-size:12px;line-height:14px;transform:scaleX(0.9583);">出力</div>
<div class="a" style="left:380px;top:727px;width:1px;height:14px;background:#A0A0A0"></div>
<svg class="a" style="left:386px;top:726px;" width="17" height="16" viewBox="0 0 17 16"><path d="M1.5 1.5 H12.5 V9.5 H6 L3 12 V9.5 H1.5 Z" fill="#F0F8FF" stroke="#5080B0"/><path d="M5.5 5.5 H15.5 V13.5 H13 V15.5 L10 13.5 H5.5 Z" fill="#F0F8FF" stroke="#5080B0"/></svg>
<div class="t" id="t26" style="left:405px;top:727px;font-size:12px;line-height:14px;transform:scaleX(0.7833);">メッセージ</div>
<div class="a" style="left:457px;top:722px;width:117px;height:23px;background:#D4D0C8;border-left:1px solid #808080;border-right:1px solid #404040;border-bottom:1px solid #404040"></div>
<div class="a" style="left:457px;top:722px;width:117px;height:1px;background:#D4D0C8"></div>
<svg class="a" style="left:463px;top:727px;" width="16" height="16" viewBox="0 0 16 16"><path d="M8 1 Q3 1 3 4 V6 H8 V7 H2 Q0 7 0 10 Q0 13 2 13 H4 V10 Q4 8 6 8 H10 Q12 8 12 6 V3 Q12 1 8 1 Z" fill="#3A70B0"/><path d="M8 15 Q13 15 13 12 V10 H8 V9 H14 Q16 9 16 6 Q16 3 14 3 H12 V6 Q12 8 10 8 H6 Q4 8 4 10 V13 Q4 15 8 15 Z" fill="#F0C830"/></svg>
<div class="t" id="t27" style="left:484px;top:728px;font-size:12px;line-height:14px;transform:scaleX(0.7773);">Pythonインタプリタ</div>
<div class="a" style="left:4px;top:747px;width:556px;height:24px;border:1px solid #FFF"></div>
<div class="a" style="left:561px;top:747px;width:89px;height:24px;border:1px solid #FFF"></div>
<div class="a" style="left:651px;top:747px;width:76px;height:24px;border:1px solid #FFF"></div>
<div class="a" style="left:728px;top:747px;width:91px;height:24px;border:1px solid #FFF"></div>
<div class="a" style="left:820px;top:747px;width:44px;height:24px;border:1px solid #FFF"></div>
<div class="a" style="left:865px;top:747px;width:34px;height:24px;border:1px solid #FFF"></div>
<div class="t" id="t28" style="left:15px;top:751px;font-size:12px;line-height:14px;transform:scaleX(0.8649);">Ready</div>
<svg class="a" style="left:868px;top:751px;" width="15" height="15" viewBox="0 0 15 15"><circle cx="7.5" cy="7.5" r="6.5" fill="#00E000" stroke="#10A010"/><path d="M4 7 L7 4.5" stroke="#E0FFE0" stroke-width="1.5"/></svg>
<svg class="a" style="left:884px;top:757px;" width="14" height="14" viewBox="0 0 14 14"><g fill="#808080"><rect x="11" y="2" width="2" height="2"/><rect x="7" y="6" width="2" height="2"/><rect x="11" y="6" width="2" height="2"/><rect x="3" y="10" width="2" height="2"/><rect x="7" y="10" width="2" height="2"/><rect x="11" y="10" width="2" height="2"/></g></svg></body></html>
